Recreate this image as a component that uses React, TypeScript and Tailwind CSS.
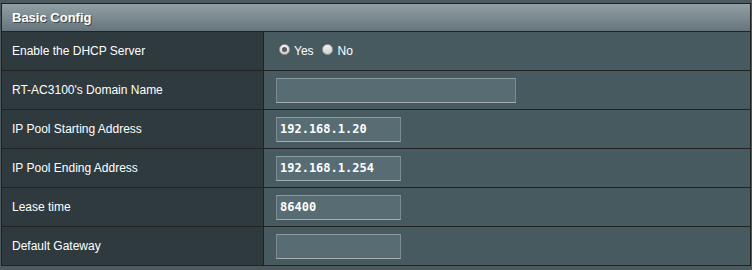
import React from "react";

const rows: { label: string; kind: "radio" | "input"; value?: string; wide?: boolean }[] = [
  { label: "Enable the DHCP Server", kind: "radio" },
  { label: "RT-AC3100's Domain Name", kind: "input", value: "", wide: true },
  { label: "IP Pool Starting Address", kind: "input", value: "192.168.1.20" },
  { label: "IP Pool Ending Address", kind: "input", value: "192.168.1.254" },
  { label: "Lease time", kind: "input", value: "86400" },
  { label: "Default Gateway", kind: "input", value: "" },
];

function Radio({ checked }: { checked?: boolean }) {
  return (
    <span className="relative inline-flex h-[11px] w-[11px] items-center justify-center rounded-full border border-[#a0a0a0] bg-[linear-gradient(180deg,#f2f2f2_0%,#d0d0d0_100%)]">
      {checked && <span className="h-[5px] w-[5px] rounded-full bg-[#5a5a5a]" />}
    </span>
  );
}

export default function App() {
  return (
    <div className="h-[270px] w-[752px] bg-[#4D595D] px-[1px] pt-[3px] font-['Liberation_Sans',Arial,sans-serif]">
      <div className="border border-[#222]">
        <div className="flex h-[27px] items-center bg-[linear-gradient(180deg,#92A0A5_0%,#66757C_100%)] pl-[10px] text-[13px] font-bold text-white [text-shadow:1px_1px_0_#3a464b]">
          Basic Config
        </div>
        {rows.map((r, i) => (
          <div key={i} className="flex h-[39px] border-t border-[#222]">
            <div className="flex w-[262px] items-center border-r border-[#222] bg-[#2F3A3E] pl-[10px] text-[12px] text-white">
              {r.label}
            </div>
            <div className="flex flex-1 items-center bg-[#475A5F] pl-[12px]">
              {r.kind === "radio" ? (
                <div className="flex items-center text-[12px] text-white">
                  <span className="ml-[3px] mt-[-3px] flex"><Radio checked /></span>
                  <span className="ml-[4px]">Yes</span>
                  <span className="ml-[8px] mt-[-3px] flex"><Radio /></span>
                  <span className="ml-[5px]">No</span>
                </div>
              ) : (
                <div
                  className={`flex h-[25px] items-center border-x border-y border-x-[#7d8b8f] border-t-[#8d9a9e] border-b-[#a3aeb1] bg-[#576D73] pl-[3px] font-['DejaVu_Sans_Mono',monospace] text-[12px] font-bold text-white ${r.wide ? "w-[240px]" : "w-[125px]"}`}
                >
                  {r.value}
                </div>
              )}
            </div>
          </div>
        ))}
      </div>
    </div>
  );
}
